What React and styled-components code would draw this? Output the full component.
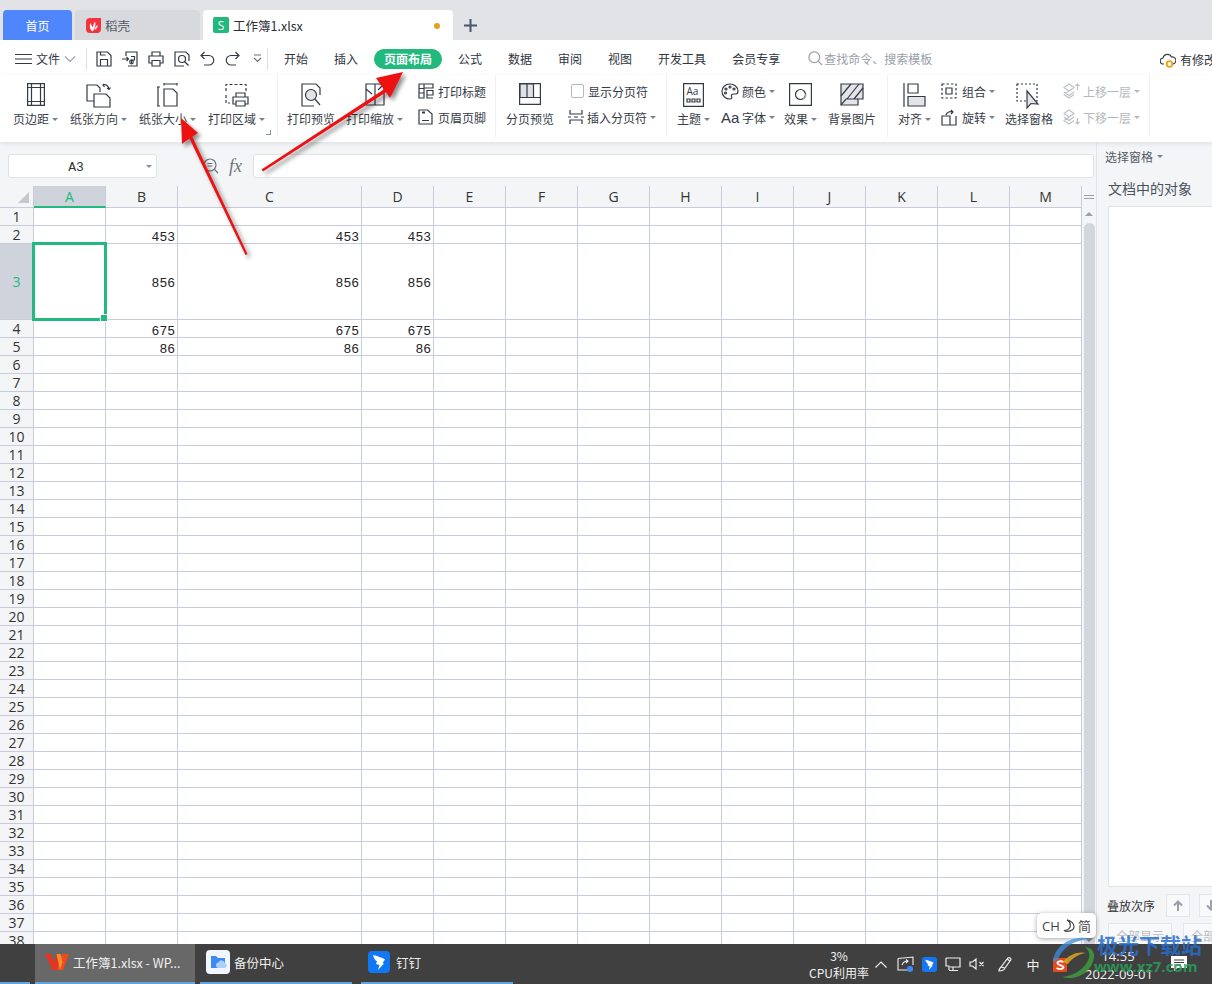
import React from "react";
import styled, { createGlobalStyle } from "styled-components";

const CJK = `"Noto Sans CJK SC", "Noto Sans", sans-serif`;
const INK = "#343a46";
const LINE = "#c8ccda";
const GREEN = "#21b97e";

const Global = createGlobalStyle`
  html, body { margin: 0; padding: 0; background: #fff; }
  body { font-family: ${CJK}; font-size: 12px; color: ${INK}; }
  * { box-sizing: border-box; }
`;

const Page = styled.div`
  position: relative; width: 1212px; height: 984px; overflow: hidden;
  display: flex; flex-direction: column; background: #fff;
`;

/* ---------- title bar ---------- */
const TitleBar = styled.div`
  height: 40px; flex: none; background: #e2e3e7; display: flex; align-items: flex-end; padding-left: 3px; gap: 3px;
`;
const HomeTab = styled.div`
  width: 69px; height: 30px; background: #4f86fb; color: #fff; border-radius: 4px 4px 0 0;
  display: flex; align-items: center; justify-content: center; font-size: 12px;
`;
const DocTab = styled.div`
  height: 30px; width: ${p => p.$w}px; border-radius: 4px 4px 0 0; background: ${p => p.$active ? "#fff" : "#d8d9dd"};
  color: ${p => p.$active ? "#2a2e36" : "#555a64"}; display: flex; align-items: center; font-size: 12.5px;
  padding-left: ${p => p.$pad}px; gap: 4px; position: relative;
`;
const XlsMark = styled.span`
  width: 16px; height: 16px; background: ${GREEN}; color: #fff; border-radius: 2px; display: flex;
  align-items: center; justify-content: center; font: 12px "Open Sans", sans-serif;
`;
const Dirty = styled.span`
  position: absolute; left: 231px; top: 13px; width: 6px; height: 6px; border-radius: 50%; background: #e6a11a;
`;
const PlusTab = styled.div`
  margin-left: 4px; width: 20px; height: 30px; display: flex; align-items: center; justify-content: center;
  color: #4a5568;
`;

/* ---------- menu row ---------- */
const MenuRow = styled.div`
  height: 35px; flex: none; display: flex; align-items: center; padding: 2px 0 0 15px; background: #fff; position: relative;
`;
const FileMenu = styled.div`
  display: flex; align-items: center; gap: 4px; width: 71px; font-size: 12px;
`;
const VSep = styled.span`
  width: 1px; height: 22px; background: #dcdfe4; flex: none;
`;
const QuickBar = styled.div`
  display: flex; align-items: center; width: 180px; padding-left: 9px; gap: 10px;
`;
const QuickMore = styled.span`
  margin-left: 3px;
`;
const TabList = styled.div`
  display: flex; align-items: center; padding-left: 3px;
`;
const MenuTab = styled.div`
  padding: 0 13px; font-size: 12px; line-height: 20px; white-space: nowrap; color: #30343c;
`;
const ActiveTab = styled.div`
  padding: 0 10px; margin: 0 3px; height: 20px; line-height: 20px; font-size: 12px; font-weight: 700;
  background: ${GREEN}; color: #fff; border-radius: 10px; white-space: nowrap;
`;
const SearchHint = styled.div`
  display: flex; align-items: center; gap: 1px; margin-left: 15px; color: #9aa0aa; font-size: 12px; white-space: nowrap;
`;
const SyncState = styled.div`
  position: absolute; left: 1160px; top: 11px; display: flex; align-items: center; gap: 4px; font-size: 12px; white-space: nowrap; color: #30343c;
`;

/* ---------- ribbon ---------- */
const Ribbon = styled.div`
  height: 67px; flex: none; display: flex; background: #fff; position: relative; z-index: 2;
  box-shadow: 0 2px 4px rgba(60, 70, 90, .10);
`;
const Group = styled.div`
  position: relative; display: flex; align-items: flex-start; height: 62px; flex: none;
  width: ${p => p.$w}px; padding-left: ${p => p.$pl}px; gap: ${p => p.$gap}px; border-right: 1px solid #eef0f3;
`;
const Large = styled.div`
  display: flex; flex-direction: column; align-items: center; padding-top: 5px; margin-left: ${p => p.$ml || 0}px;
`;
const IconBox = styled.div`
  height: 30px; display: flex; align-items: flex-start; justify-content: center; padding-top: 3px; color: ${INK};
`;
const Label = styled.div`
  height: 18px; line-height: 18px; font-size: 12px; white-space: nowrap; display: flex; align-items: center; gap: 3px; color: ${p => p.$off ? "#b5b8bd" : "#3a3f4a"};
`;
const Caret = styled.span`
  width: 0; height: 0; border-left: 3px solid transparent; border-right: 3px solid transparent;
  border-top: 3px solid ${p => p.$off ? "#b5b8bd" : "#7a808c"}; flex: none;
`;
const Stack = styled.div`
  display: flex; flex-direction: column; margin-top: 3px; margin-left: ${p => p.$ml || 0}px;
`;
const Small = styled.div`
  height: 26px; display: flex; align-items: center; gap: 3px; white-space: nowrap; color: ${p => p.$off ? "#b5b8bd" : INK};
  padding-left: ${p => p.$pl || 0}px;
`;
const SmallText = styled.span`
  margin-left: 2px;
`;
const Checkbox = styled.span`
  width: 13px; height: 14px; border: 1px solid #b4b8c0; border-radius: 2px; background: #fff; flex: none; margin-right: 1px;
`;
const AaText = styled.span`
  font: 15px "Liberation Sans", sans-serif; width: 18px; color: ${INK};
`;
const Launcher = styled.span`
  position: absolute; left: 266px; top: 55px; width: 5px; height: 5px; border-right: 1px solid #8a909c; border-bottom: 1px solid #8a909c;
`;

/* ---------- body ---------- */
const Body = styled.div`
  flex: 1; min-height: 0; display: flex; background: #f3f5f7;
`;
const WorkArea = styled.div`
  width: 1096px; flex: none; display: flex; flex-direction: column; min-height: 0;
`;
const FormulaBar = styled.div`
  height: 44px; flex: none; padding: 12px 2px 8px 8px; display: flex; align-items: stretch; background: #f3f5f7;
`;
const NameBox = styled.div`
  width: 149px; border: 1px solid #dfe2e7; border-radius: 3px; background: #fff; position: relative;
  display: flex; align-items: center; justify-content: center; font: 13px "Liberation Mono", monospace; color: #333;
  padding: 2px 13px 0 0;
`;
const NameCaret = styled(Caret)`
  position: absolute; right: 4px; top: 10px; border-top-color: #8a909c;
`;
const FormulaTools = styled.div`
  width: 96px; display: flex; align-items: center; padding-left: 46px; gap: 10px; color: #6e7480;
`;
const Fx = styled.span`
  font: italic 18px "Liberation Serif", serif; color: #6e7480; line-height: 1;
`;
const FormulaInput = styled.div`
  flex: 1; background: #fff; border: 1px solid #dfe2e7; border-radius: 3px;
`;
const SheetRow = styled.div`
  flex: 1; min-height: 0; display: flex;
`;
const Grid = styled.div`
  width: 1082px; flex: none; overflow: hidden; display: grid; background: #fff;
  grid-template-columns: 34px 72px 72px 184px 72px repeat(9, 72px);
  grid-template-rows: 22px 18px 18px 76px 18px 18px repeat(33, 18px);
`;
const Corner = styled.div`
  background: #f3f5f7; border-right: 1px solid ${LINE}; border-bottom: 1px solid ${LINE}; position: relative;
  &::after {
    content: ""; position: absolute; right: 4px; bottom: 4px; width: 0; height: 0;
    border-left: 11px solid transparent; border-bottom: 11px solid #c4c7cd;
  }
`;
const ColHead = styled.div`
  background: ${p => p.$on ? "#cfd3db" : "#f3f5f7"}; color: ${p => p.$on ? GREEN : "#333"};
  border-right: 1px solid ${LINE}; border-bottom: ${p => p.$on ? `2px solid ${GREEN}` : `1px solid ${LINE}`};
  display: flex; align-items: center; justify-content: center; font: 14px "Open Sans", sans-serif;
`;
const RowHead = styled.div`
  background: ${p => p.$on ? "#cfd3db" : "#f3f5f7"}; color: ${p => p.$on ? GREEN : "#333"};
  border-right: 1px solid ${LINE}; border-bottom: 1px solid ${LINE};
  display: flex; align-items: center; justify-content: center; font: 14px/1 "Open Sans", sans-serif;
`;
const Cell = styled.div`
  position: relative; border-right: 1px solid ${LINE}; border-bottom: 1px solid ${LINE};
  display: flex; justify-content: flex-end; align-items: ${p => p.$mid ? "center" : "flex-end"};
  padding: ${p => p.$mid ? "4px" : "0"} 2px 0 0; font: 13px/11px "Liberation Mono", monospace; color: #222;
`;
const Selection = styled.div`
  position: absolute; left: -2px; top: -2px; right: -2px; bottom: -2px; border: 3px solid ${GREEN}; z-index: 1;
  &::after {
    content: ""; position: absolute; right: -4px; bottom: -4px; width: 6px; height: 6px; background: ${GREEN}; border: 1px solid #fff;
  }
`;
const ScrollBar = styled.div`
  width: 14px; flex: none; background: #f3f5f7; position: relative; display: flex; flex-direction: column; align-items: center;
`;
const ScrollGrip = styled.div`
  height: 22px; width: 100%; display: flex; flex-direction: column; justify-content: center; align-items: center; gap: 2px;
  span { width: 10px; height: 1px; background: #9aa0aa; }
`;
const ScrollUp = styled.div`
  width: 0; height: 0; margin-top: 4px; border-left: 4px solid transparent; border-right: 4px solid transparent; border-bottom: 4px solid #9aa0aa;
`;
const Thumb = styled.div`
  width: 11px; flex: 1; margin-top: 7px; background: #d3d6df; border-radius: 6px 6px 0 0;
`;

/* ---------- side pane ---------- */
const Side = styled.div`
  width: 116px; flex: none; border-left: 1px solid #e3e5ea; padding: 6px 0 0 11px; background: #f3f5f7;
  display: flex; flex-direction: column; overflow: hidden; position: relative;
`;
const SideTop = styled.div`
  margin-left: -3px; display: flex; align-items: center; gap: 4px; height: 16px; color: #555b66; font-size: 12px; white-space: nowrap;
`;
const SideTitle = styled.div`
  margin: 15px 0 0 0; height: 18px; line-height: 18px; font-size: 14px; color: #4a505c; white-space: nowrap;
`;
const ObjectList = styled.div`
  margin-top: 9px; width: 120px; height: 681px; flex: none; background: #fff; border: 1px solid #e2e4e9; border-radius: 2px;
`;
const OrderRow = styled.div`
  margin-top: 7px; display: flex; align-items: center; height: 23px; font-size: 12px; color: #333; white-space: nowrap; margin-left: -1px;
`;
const OrderBtn = styled.div`
  width: 24px; height: 23px; border: 1px solid #e4e6ea; background: #f8f9fa; margin-left: ${p => p.$ml}px; flex: none;
  display: flex; align-items: center; justify-content: center; color: #9aa0aa;
`;
const ActionRow = styled.div`
  margin-top: 6px; display: flex; gap: 11px;
`;
const GhostBtn = styled.div`
  width: 64px; height: 24px; flex: none; border: 1px solid #e4e6ea; background: #f8f9fa; color: #b9bcc2; font-size: 12px;
  display: flex; align-items: center; justify-content: center; white-space: nowrap;
`;

/* ---------- taskbar ---------- */
const Taskbar = styled.div`
  height: 40px; flex: none; background: #404040; display: flex; color: #f2f2f2; position: relative; z-index: 3;
`;
const StartSlot = styled.div`
  width: 35px; flex: none; position: relative;
  &::after { content: ""; position: absolute; left: 0; right: 5px; bottom: 0; height: 2px; background: #60a5e0; }
`;
const TaskItem = styled.div`
  position: relative; width: ${p => p.$w}px; margin-right: ${p => p.$mr || 0}px; flex: none; height: 100%;
  background: ${p => p.$on ? "#686868" : "transparent"}; display: flex; align-items: center; gap: ${p => p.$gap}px;
  padding: 0 0 4px ${p => p.$pl}px; font-size: 12.5px; white-space: nowrap; color: #f0f0f0;
  &::after { content: ""; position: absolute; left: 0; right: 0; bottom: 0; height: 2px; background: #60a5e0; }
`;
const Tray = styled.div`
  margin-left: auto; display: flex; align-items: center; width: 403px; height: 100%; flex: none; position: relative;
`;
const CpuMeter = styled.div`
  width: 60px; flex: none; text-align: center; font-size: 12px; line-height: 17px; white-space: nowrap; margin-right: 6px;
`;
const TrayIcons = styled.div`
  display: flex; align-items: center; width: 210px; flex: none;
`;
const TraySlot = styled.span`
  display: flex; margin-left: ${p => p.$ml}px; flex: none;
`;
const ImeChar = styled.span`
  font-size: 13px; width: 14px; text-align: center;
`;
const Clock = styled.div`
  width: 66px; flex: none; text-align: center; font: 13px/18px "Open Sans", sans-serif; white-space: nowrap; margin-top: 2px;
`;
const Notify = styled.div`
  margin-left: 20px; color: #fff; display: flex; margin-top: -2px;
`;

/* ---------- overlays ---------- */
const ImeTip = styled.div`
  position: absolute; left: 1037px; top: 913px; width: 59px; height: 25px; background: #fff; border-radius: 5px; z-index: 5;
  box-shadow: 0 1px 5px rgba(0,0,0,.35); display: flex; align-items: center; justify-content: center; gap: 3px;
  font: 13px "Open Sans", ${CJK}; color: #444; white-space: nowrap;
`;
const ImeCaret = styled.span`
  position: absolute; left: 1085px; top: 938px; width: 0; height: 0; z-index: 5;
  border-left: 4px solid transparent; border-right: 4px solid transparent; border-top: 4px solid #777;
`;
const Mark = styled.div`
  position: absolute; left: 1050px; top: 932px; width: 162px; height: 50px; z-index: 6; pointer-events: none;
`;
const MarkTitle = styled.div`
  position: absolute; left: 47px; top: 0; font-size: 21px; line-height: 24px; font-weight: 700; color: rgba(40, 110, 205, .85); white-space: nowrap;
`;
const MarkUrl = styled.div`
  position: absolute; left: 44px; top: 24px; font: 700 15px/20px "Open Sans", sans-serif; color: rgba(40, 160, 90, .85); white-space: nowrap;
`;
const ArrowLayer = styled.svg`
  position: absolute; left: 0; top: 0; width: 1212px; height: 984px; z-index: 4; pointer-events: none;
  filter: drop-shadow(3px 3px 2px rgba(0,0,0,.45));
`;

/* ---------- icons ---------- */
const Ic = ({ w = 24, h = 24, sw = 1.2, children, c = "currentColor" }) => (
  <svg width={w} height={h} viewBox={`0 0 ${w} ${h}`} fill="none" stroke={c} strokeWidth={sw} style={{ flex: "none", display: "block" }}>{children}</svg>
);

const Ham = () => <Ic w={17} h={12}><path d="M0 1.5h17M0 6h17M0 10.5h17" /></Ic>;
const Chev = () => <Ic w={12} h={8} c="#9aa0aa"><path d="M1 1.5 6 6.5 11 1.5" /></Ic>;
const QSave = () => <Ic w={16} h={16}><path d="M1 1h10.5L15 4.5V15H1z M4.5 15V8.5h7V15 M4.5 1v3h5" /></Ic>;
const QExport = () => <Ic w={16} h={16}><path d="M4 5V1h11v14H6 M0 8h6.5M4.5 6l2 2-2 2 M9 5.5h3.5V9H9.5v3.5" /><circle cx="9.5" cy="11" r="1.8" /></Ic>;
const QPrint = () => <Ic w={16} h={16}><path d="M4 5V1h8v4 M4 12H1V5h14v7h-3 M4 9.5h8V15H4z" /></Ic>;
const QPreview = () => <Ic w={16} h={16}><path d="M15 10V4l-3-3H1v14h9" /><circle cx="8" cy="8" r="3.5" /><path d="m10.5 10.5 4 4" /></Ic>;
const QUndo = () => <Ic w={15} h={15}><path d="M4.5 1 1 4.5 4.5 8 M1 4.5h8a4.5 4.5 0 0 1 0 9.5H4" /></Ic>;
const QRedo = () => <Ic w={15} h={15}><path d="M10.5 1 14 4.5 10.5 8 M14 4.5H6a4.5 4.5 0 0 0 0 9.5h5" /></Ic>;
const QMore = () => <Ic w={9} h={9} c="#6a707c"><path d="M1 1h7M1 4l3.5 3.5L8 4" /></Ic>;

const Margins = () => <Ic w={18} h={23}><path d="M.6.6h16.8v21.8H.6z M4.5.6v21.8M13.5.6v21.8M.6 4.5h16.8M.6 18.5h16.8" /></Ic>;
const Orient = () => <Ic w={25} h={25}><path d="M8 18H1V2h10l3 3v4" /><path d="M8 11h12l4 4v9H8z" /><path d="M17 2c3-1 5 .5 6 4M21 5l2 1.5L24.5 4.5M18 1l-1 1 1.5 2" /></Ic>;
const PaperSize = () => <Ic w={21} h={24}><path d="M1 4v19M0 4h3M0 23h3 M7 1h13M7 0v2.500M20 0v2.500 M7 6h9l4 4v13H7z" /></Ic>;
const PrintArea = () => <Ic w={24} h={24}><path d="M1 8V1.500h20V9 M1 12v8h4" strokeDasharray="3 2" /><path d="M11 14v-4h9v4 M11 21H8v-7h15v7h-3 M11 18h9v5h-9z" /></Ic>;
const PrintPreview = () => <Ic w={20} h={24}><path d="M19 12V5l-4-4H1v22h12" /><circle cx="10" cy="12" r="5.500" fill="#e2e3e7" /><path d="m14 16 5 6" /></Ic>;
const PrintScale = () => <Ic w={20} h={23}><path d="M1 1h18v21H1z M1 6l6 5 M19 1l-6 6 M10 1v21" /></Ic>;
const PrintTitle = () => <Ic w={17} h={16}><path d="M1 1h5v14H1z M6 1h9v4H6z M1 5.500h5M1 10h5M9 7.500h6V12h-6z M9 12v3h6" /></Ic>;
const HeaderFoot = () => <Ic w={15} h={16}><path d="M1 1h8.500L14 5v10H1z M4 11.500h7" /><path d="M4 3.500h3" strokeWidth="2" /></Ic>;
const PageBreak = () => <Ic w={22} h={22}><path d="M.6.6h20.800v20.800H.6z M.6 14.500h20.800" /><path d="M1 1h7v13.500H1zM8 1h6.500v13.500H8z" fill="#dfe1e5" /></Ic>;
const InsertBreak = () => <Ic w={16} h={14}><path d="M2 0v4h12V0 M2 14v-4h12v4 M0 7h3M6 7h4M13 7h3" /></Ic>;
const Theme = () => <svg width={21} height={24} viewBox="0 0 21 24" style={{ display: "block" }} fill="none" stroke={INK} strokeWidth="1.2"><path d="M.6.6h19.800v22.800H.6z" /><text x="3.500" y="12" fill={INK} stroke="none" fontSize="10" fontFamily="Open Sans, sans-serif">Aa</text><path d="M4 16h3v3H4zM9 16h3v3H9zM14 16h3v3h-3z" /></svg>;
const Palette = () => <Ic w={18} h={17}><path d="M9 1C4 1 1 4.500 1 8.500 1 13 5 16 9 16c2 0 2-1.500 1.500-2.500C10 12 11 11 12.500 11H15c1.500 0 2-1.500 2-3 0-4-4-7-8-7z" /><circle cx="5" cy="6" r="1" /><circle cx="9" cy="4" r="1" /><circle cx="13" cy="6" r="1" /><circle cx="4.500" cy="10" r="1" /></Ic>;
const Effect = () => <Ic w={23} h={23}><path d="M.6.6h21.800v21.800H.6z" /><circle cx="11.500" cy="11.500" r="5" /><path d="M14 16a6 6 0 0 0 3-5" stroke="#aaa" /></Ic>;
const BgImage = () => <Ic w={24} h={23}><path d="M1 1h22v15h-5v6H1z" fill="#e2e4e8" /><path d="M1 13 11 1M7 16 19 1M14 16l9-11M1 22l5-6h12" /></Ic>;
const Align = () => <Ic w={23} h={24}><path d="M1 0v24 M5 1h10v9H5z" /><path d="M5 13.500h17V23H5z" fill="#e2e4e8" /></Ic>;
const Combine = () => <Ic w={16} h={16}><path d="M1 1h14v14H1z" strokeDasharray="2.500 2" /><path d="M5 5h6v6H5z" /></Ic>;
const Rotate = () => <Ic w={16} h={17}><path d="M1 7h8v9H1z M9 16h6V7 M5 6c1-3 4-4 7-3M10 1l2 2-2 2" /></Ic>;
const Pane = () => <Ic w={26} h={27}><path d="M1 1h20v17H1z" strokeDasharray="2 2" /><path d="M11 8v17l4-4.500 7 .5z" fill="#e2e4e8" /></Ic>;
const LayerUp = () => <Ic w={17} h={16} c="#bcc0c6"><path d="M6 1 1 4.500 6 8l5-3.500z M1 9l5 3.500 5-3.500 M6 8 1 11.500 6 15l5-3.500 M14.500 7V1M12.500 3l2-2 2 2" /></Ic>;
const LayerDown = () => <Ic w={17} h={16} c="#bcc0c6"><path d="M6 1 1 4.500 6 8l5-3.500z M1 8l5 3.500L11 8 M6 8 1 11.500 6 15l5-3.500 M14.500 9v6M12.500 13l2 2 2-2" /></Ic>;
const Lens = ({ c = "#9aa0aa", s = 15 }) => <Ic w={s} h={s} c={c}><circle cx={s * .42} cy={s * .42} r={s * .36} /><path d={`M${s * .68} ${s * .68} ${s - 1} ${s - 1}`} /></Ic>;
const ZoomLens = () => <Ic w={16} h={16} c="#6e7480"><circle cx="7" cy="7" r="6" /><path d="M4.500 5.500h5M4.500 8h5M11.500 11.500 15 15" /></Ic>;
const Cloud = () => <svg width={16} height={16} viewBox="0 0 16 16" fill="none" style={{ display: "block" }}><path d="M4 12H3.500a3 3 0 0 1-.5-6 4.500 4.500 0 0 1 8.500-1A3.500 3.500 0 0 1 13 12" stroke={INK} strokeWidth="1.1" /><circle cx="9.500" cy="12" r="2.800" stroke="#f0a010" strokeWidth="1.800" /></svg>;
const DaokeMark = () => <svg width={15} height={15} viewBox="0 0 15 15" style={{ display: "block", flex: "none" }}><path d="M4 0h11v11a4 4 0 0 1-4 4H4a4 4 0 0 1-4-4V4a4 4 0 0 1 4-4z" fill="#f4333f" /><path d="M6.500 13.500C4 11.500 3 8.500 4.500 5c.8 2 1.600 3.500 2.500 4.500.2-2.500 1-4.500 2-6C10 6.500 9.300 10.500 6.500 13.500z" fill="#fff" /><path d="M8.500 12c1.500-.6 3-2.300 3.500-5-1.200.5-2 1.200-2.500 2z" fill="#fff" /></svg>;
const Plus = () => <Ic w={13} h={13} sw={2} c="#4a5568"><path d="M6.500 0v13M0 6.500h13" /></Ic>;
const Up = ({ c }) => <Ic w={10} h={11} sw={2} c={c}><path d="M5 11V2M1 5.500 5 1.500l4 4" /></Ic>;
const Down = ({ c }) => <Ic w={10} h={11} sw={2} c={c}><path d="M5 0v9M1 5.500l4 4 4-4" /></Ic>;

const WpsLogo = () => <svg width={24} height={18} viewBox="0 0 24 18" style={{ display: "block", flex: "none" }}><path d="M0 1h6l3 9 2.500-9h4L12 17H7.500z" fill="#e8341e" /><path d="M12 17 17 1h7l-6 16z" fill="#f04a1c" /><path d="M11.500 1h4l2 8-2.500 8z" fill="#ffb02a" opacity=".7" /></svg>;
const BackupLogo = () => <svg width={24} height={24} viewBox="0 0 24 24" style={{ display: "block", flex: "none" }}><rect width="24" height="24" rx="4" fill="#f2f6fe" /><path d="M5 6h5l2 2h7v5H5z" fill="#3d8bf2" /><path d="M5 9h14v9H5z" fill="#3d8bf2" /><path d="M12 18a3 3 0 0 1 .5-5.800 3.500 3.500 0 0 1 6.500 1 2.500 2.500 0 0 1 0 4.800z" fill="#a8d1fb" /></svg>;
const DingLogo = ({ s = 22 }) => <svg width={s} height={s} viewBox="0 0 22 22" style={{ display: "block", flex: "none" }}><rect width="22" height="22" rx="4" fill="#1077f5" /><path d="M5 4c4 1 9 2.500 12 4.500l-2.500 3.500 1.500.5L10 19l1.500-5L8 13l1-2.500C7 9 5.500 7 5 4z" fill="#fff" /></svg>;
const SogouLogo = () => <svg width={15} height={15} viewBox="0 0 15 15" style={{ display: "block", flex: "none" }}><rect y="1" width="14" height="14" rx="1" fill="#e8481e" /><path d="M10.500 5C8 3.500 4 4.500 4.500 6.500S11 8.500 10.500 10.500 6 12.500 3.500 11" stroke="#fff" strokeWidth="1.800" fill="none" /></svg>;
const TrayUp = () => <Ic w={12} h={7} c="#eee"><path d="M.5 6.500 6 1l5.500 5.500" /></Ic>;
const TrayTask = () => <svg width={17} height={16} viewBox="0 0 17 16" fill="none" stroke="#eee" strokeWidth="1.100" style={{ display: "block", flex: "none" }}><path d="M1 2.500 16 1v8M11 14H1V2.500M5 9c1-3 3-4 6-4M9 3.500l2 1.500-2 2" /><circle cx="13" cy="13" r="3" fill="#3d8bf2" stroke="none" /></svg>;
const TrayNet = () => <Ic w={16} h={14} c="#eee"><path d="M1 1h14v9H5 M1 1v8h3v4 M8 10v3.500M4 13.500h9" /></Ic>;
const TrayVol = () => <Ic w={16} h={14} c="#eee"><path d="M1 5v4h2.500L7 12V2L3.500 5z M10.500 5l4 4M14.500 5l-4 4" /></Ic>;
const TrayPen = () => <Ic w={16} h={16} c="#eee"><path d="M4 11 11 2c1-1 3 0 3 1.500L8 12c-1 2-4 3-6 3 0-1 1-3 2-4zM8 12 4 11M10 3l3 2" /></Ic>;
const Moon = () => <Ic w={12} h={13} c="#444"><path d="M4 1a6 6 0 0 1 3 7c-1 2-3 3.500-6 3.500 3 1.500 10 1 10-4 0-3-3-6-7-6.500z" /></Ic>;
const Bubble = () => <Ic w={16} h={15} c="#fff"><path d="M.5.5h15v11H6L3.500 14v-2.500h-3z" fill="#fff" /><path d="M3 4h10M3 6.500h10M3 9h7" stroke="#404040" /></Ic>;

/* ---------- data ---------- */
const COLS = ["A", "B", "C", "D", "E", "F", "G", "H", "I", "J", "K", "L", "M"];
const VALUES = { 2: "453", 3: "856", 4: "675", 5: "86" };
const VALUE_COLS = ["B", "C", "D"];
const ROWS = Array.from({ length: 38 }, (_, i) => i + 1);
const TABS = ["数据", "审阅", "视图", "开发工具", "会员专享"];

const Dd = ({ children, off }) => <Label $off={off}>{children}<Caret $off={off} /></Label>;

export default function App() {
  return (
    <Page>
      <Global />
      <TitleBar>
        <HomeTab>首页</HomeTab>
        <DocTab $w={125} $pad={11}><DaokeMark />稻壳</DocTab>
        <DocTab $w={250} $pad={10} $active><XlsMark>S</XlsMark>工作簿1.xlsx<Dirty /></DocTab>
        <PlusTab><Plus /></PlusTab>
      </TitleBar>

      <MenuRow>
        <FileMenu><Ham />文件<Chev /></FileMenu>
        <VSep />
        <QuickBar>
          <QSave /><QExport /><QPrint /><QPreview /><QUndo /><QRedo /><QuickMore><QMore /></QuickMore>
        </QuickBar>
        <VSep />
        <TabList>
          <MenuTab>开始</MenuTab>
          <MenuTab>插入</MenuTab>
          <ActiveTab>页面布局</ActiveTab>
          <MenuTab>公式</MenuTab>
          {TABS.map(t => <MenuTab key={t}>{t}</MenuTab>)}
        </TabList>
        <SearchHint><Lens />查找命令、搜索模板</SearchHint>
        <SyncState><Cloud />有修改</SyncState>
      </MenuRow>

      <Ribbon>
        <Group $w={278} $pl={13} $gap={12}>
          <Large><IconBox><Margins /></IconBox><Dd>页边距</Dd></Large>
          <Large><IconBox><Orient /></IconBox><Dd>纸张方向</Dd></Large>
          <Large><IconBox><PaperSize /></IconBox><Dd>纸张大小</Dd></Large>
          <Large><IconBox><PrintArea /></IconBox><Dd>打印区域</Dd></Large>
          <Launcher />
        </Group>
        <Group $w={218} $pl={9} $gap={11}>
          <Large><IconBox><PrintPreview /></IconBox><Label>打印预览</Label></Large>
          <Large><IconBox><PrintScale /></IconBox><Dd>打印缩放</Dd></Large>
          <Stack $ml={4}>
            <Small><PrintTitle />打印标题</Small>
            <Small><HeaderFoot /><SmallText>页眉页脚</SmallText></Small>
          </Stack>
        </Group>
        <Group $w={171} $pl={10} $gap={14}>
          <Large><IconBox><PageBreak /></IconBox><Label>分页预览</Label></Large>
          <Stack>
            <Small $pl={3}><Checkbox />显示分页符</Small>
            <Small><InsertBreak />插入分页符<Caret /></Small>
          </Stack>
        </Group>
        <Group $w={221} $pl={10} $gap={11}>
          <Large><IconBox><Theme /></IconBox><Dd>主题</Dd></Large>
          <Stack>
            <Small><Palette />颜色<Caret /></Small>
            <Small><AaText>Aa</AaText>字体<Caret /></Small>
          </Stack>
          <Large $ml={-2}><IconBox><Effect /></IconBox><Dd>效果</Dd></Large>
          <Large><IconBox><BgImage /></IconBox><Label>背景图片</Label></Large>
        </Group>
        <Group $w={262} $pl={10} $gap={10}>
          <Large><IconBox><Align /></IconBox><Dd>对齐</Dd></Large>
          <Stack>
            <Small><Combine /><SmallText>组合</SmallText><Caret /></Small>
            <Small><Rotate /><SmallText>旋转</SmallText><Caret /></Small>
          </Stack>
          <Large><IconBox><Pane /></IconBox><Label>选择窗格</Label></Large>
          <Stack>
            <Small $off><LayerUp />上移一层<Caret $off /></Small>
            <Small $off><LayerDown />下移一层<Caret $off /></Small>
          </Stack>
        </Group>
      </Ribbon>

      <Body>
        <WorkArea>
          <FormulaBar>
            <NameBox>A3<NameCaret /></NameBox>
            <FormulaTools><ZoomLens /><Fx>fx</Fx></FormulaTools>
            <FormulaInput />
          </FormulaBar>
          <SheetRow>
            <Grid>
              <Corner />
              {COLS.map(c => <ColHead key={c} $on={c === "A"}>{c}</ColHead>)}
              {ROWS.map(r => (
                <React.Fragment key={r}>
                  <RowHead $on={r === 3}>{r}</RowHead>
                  {COLS.map(c => (
                    <Cell key={c} $mid={r === 3}>
                      {VALUES[r] && VALUE_COLS.includes(c) ? VALUES[r] : null}
                      {r === 3 && c === "A" ? <Selection /> : null}
                    </Cell>
                  ))}
                </React.Fragment>
              ))}
            </Grid>
            <ScrollBar>
              <ScrollGrip><span /><span /></ScrollGrip>
              <ScrollUp />
              <Thumb />
            </ScrollBar>
          </SheetRow>
        </WorkArea>
        <Side>
          <SideTop>选择窗格<Caret /></SideTop>
          <SideTitle>文档中的对象</SideTitle>
          <ObjectList />
          <OrderRow>
            叠放次序
            <OrderBtn $ml={11}><Up c="#9aa0aa" /></OrderBtn>
            <OrderBtn $ml={9}><Down c="#9aa0aa" /></OrderBtn>
          </OrderRow>
          <ActionRow>
            <GhostBtn>全部显示</GhostBtn>
            <GhostBtn>全部隐藏</GhostBtn>
          </ActionRow>
        </Side>
      </Body>

      <Taskbar>
        <StartSlot />
        <TaskItem $w={160} $pl={10} $gap={4} $mr={5} $on><WpsLogo />工作簿1.xlsx - WP...</TaskItem>
        <TaskItem $w={152} $pl={6} $gap={4} $mr={9}><BackupLogo />备份中心</TaskItem>
        <TaskItem $w={152} $pl={7} $gap={6}><DingLogo />钉钉</TaskItem>
        <Tray>
          <CpuMeter>3%<br />CPU利用率</CpuMeter>
          <TrayIcons>
            <TraySlot $ml={0}><TrayUp /></TraySlot>
            <TraySlot $ml={10}><TrayTask /></TraySlot>
            <TraySlot $ml={8}><DingLogo s={15} /></TraySlot>
            <TraySlot $ml={8}><TrayNet /></TraySlot>
            <TraySlot $ml={8}><TrayVol /></TraySlot>
            <TraySlot $ml={12}><TrayPen /></TraySlot>
            <TraySlot $ml={13}><ImeChar>中</ImeChar></TraySlot>
            <TraySlot $ml={13}><SogouLogo /></TraySlot>
          </TrayIcons>
          <Clock>14:55<br />2022-09-01</Clock>
          <Notify><Bubble /></Notify>
        </Tray>
      </Taskbar>

      <ImeTip>CH <Moon /> 简</ImeTip>
      <ImeCaret />
      <Mark>
        <svg width="50" height="50" viewBox="0 0 50 50" fill="none" style={{ display: "block" }}>
          <path d="M3 30C4 14 22 2 42 7 26 7 12 15 8 28z" fill="rgba(60,140,220,.75)" />
          <path d="M12 45c14 4 30-4 32-20 1-6-4-10-9-10 4 3 5 7 4 11C36 36 24 44 12 45z" fill="rgba(60,160,60,.8)" />
          <path d="M13 30c6-8 16-11 23-9-7 1-14 5-18 11z" fill="rgba(230,170,30,.8)" />
        </svg>
        <MarkTitle>极光下载站</MarkTitle>
        <MarkUrl>www.xz7.com</MarkUrl>
      </Mark>

      <ArrowLayer viewBox="0 0 1212 984">
        <path d="M261.500 169.500 263 171.500 388 91 386 88z" fill="#ee1111" />
        <path d="M403 72 376 78 383 88 390 98z" fill="#ee1111" />
        <path d="M245.500 255 247.500 254 192 136 189 137.500z" fill="#ee1111" />
        <path d="M181 118 182 144 190 138 198 133z" fill="#ee1111" />
      </ArrowLayer>
    </Page>
  );
}
